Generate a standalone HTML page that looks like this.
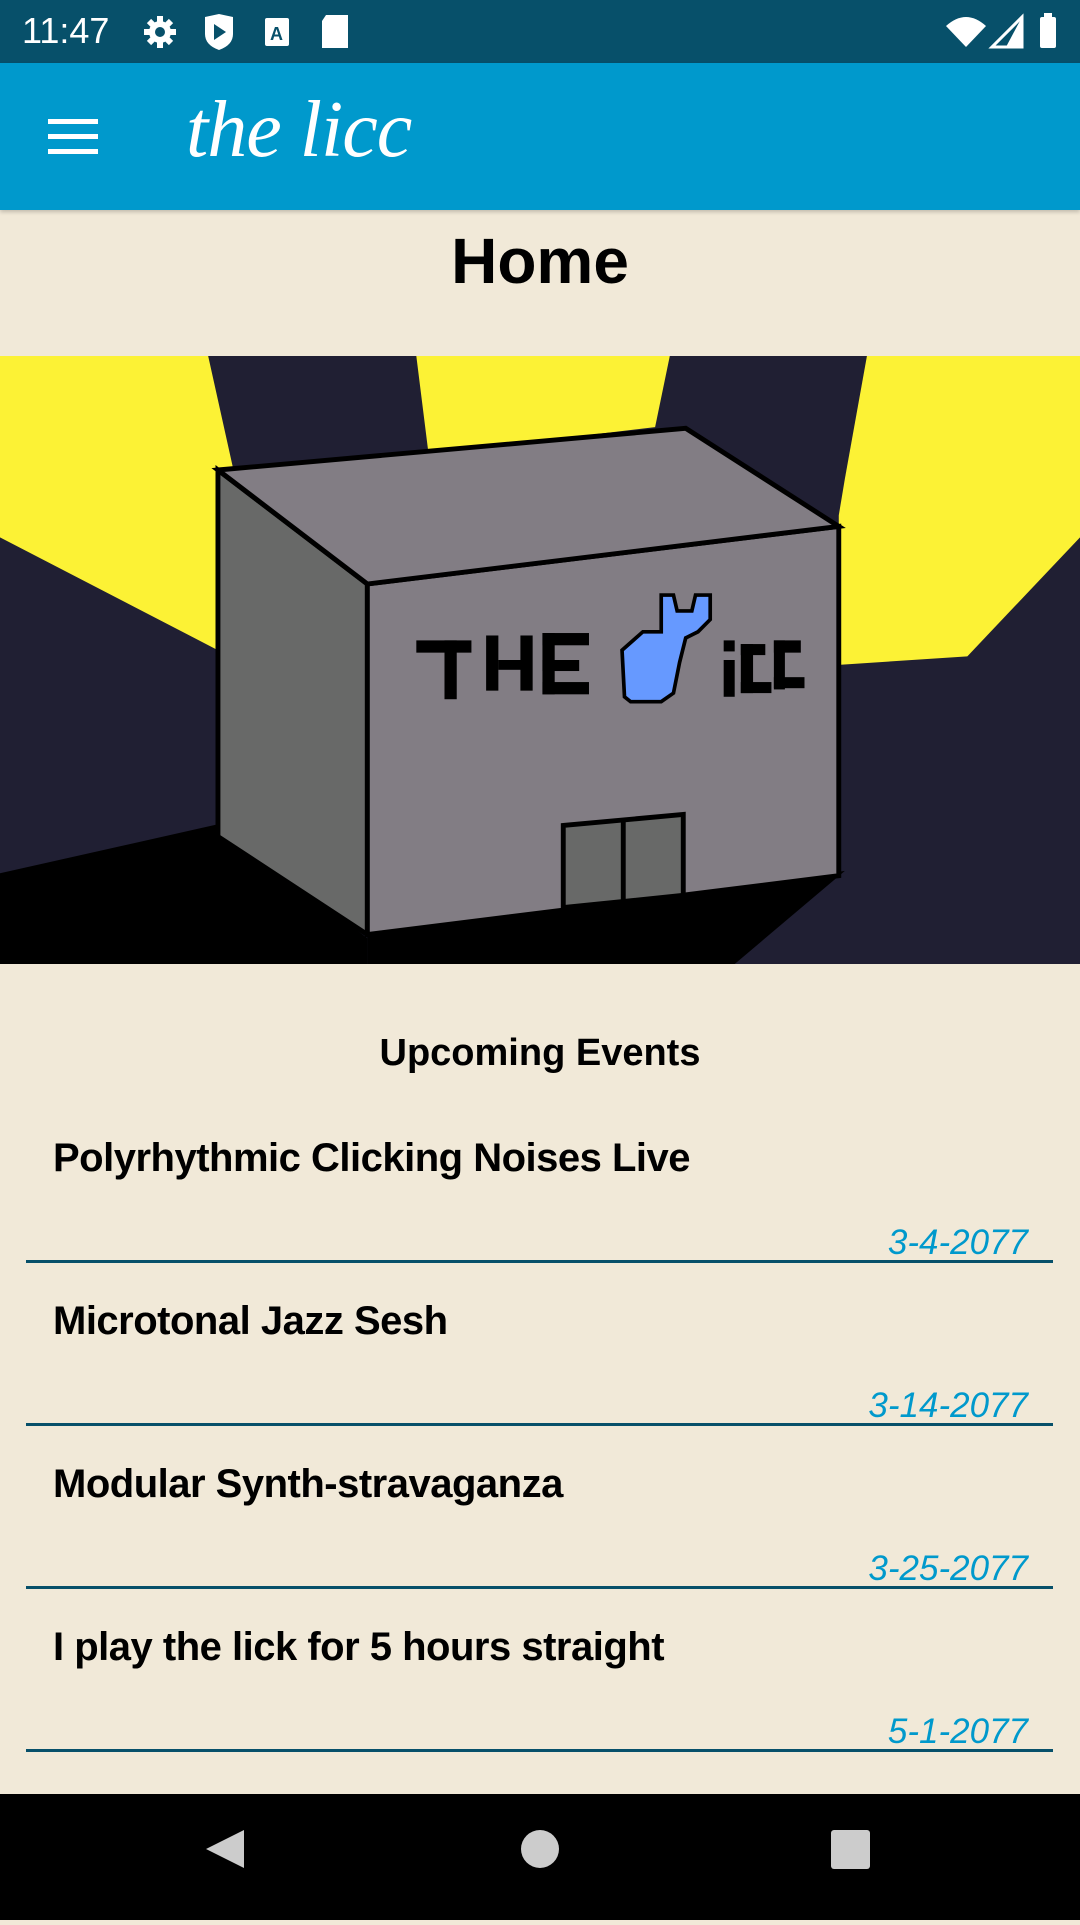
<!DOCTYPE html>
<html><head><meta charset="utf-8"><style>
*{margin:0;padding:0;box-sizing:border-box}
body{width:1080px;height:1920px;background:#F1E9D8;font-family:"Liberation Sans",sans-serif;position:relative;overflow:hidden}
.status{position:absolute;top:0;left:0;width:1080px;height:63px;background:#07506A;color:#fff}
.appbar{position:absolute;top:63px;left:0;width:1080px;height:147px;background:#0099CC;box-shadow:0 2px 4px rgba(0,0,0,.2)}
.home{position:absolute;top:224px;width:1080px;text-align:center;font-size:64px;font-weight:bold;color:#000}
.hero{position:absolute;top:356px;left:0;width:1080px;height:608px}
.up{position:absolute;top:1032px;width:1080px;text-align:center;font-size:38px;font-weight:bold}
.item{position:absolute;left:26px;width:1027px;height:163px;border-bottom:3px solid #07506A}
.item .t{position:absolute;left:27px;top:36px;font-size:40px;font-weight:bold;letter-spacing:-0.5px}
.item .d{position:absolute;right:25px;top:123px;font-size:35px;font-style:italic;color:#0099CC}
.nav{position:absolute;top:1794px;left:0;width:1080px;height:126px;background:#000}
</style></head><body>
<div class="status">
<div style="position:absolute;left:22px;top:10px;font-size:36px;">11:47</div>
<svg width="1080" height="63" style="position:absolute;left:0;top:0">
<g fill="#fff">
<circle cx="160" cy="32" r="11"/>
<g stroke="#fff" stroke-width="6"><line x1="160" y1="16" x2="160" y2="48"/><line x1="144" y1="32" x2="176" y2="32"/><line x1="149" y1="21" x2="171" y2="43"/><line x1="171" y1="21" x2="149" y2="43"/></g>
<circle cx="160" cy="32" r="5" fill="#07506A"/>
<path d="M205 17 L219 14 L233 17 L233 34 Q233 45 219 50 Q205 45 205 34Z"/>
<path d="M214 24 L226 32 L214 40Z" fill="#07506A"/>
<rect x="265" y="18" width="24" height="28" rx="2"/>
<text x="270" y="40" font-size="18" font-weight="bold" fill="#07506A" font-family="Liberation Sans">A</text>
<path d="M326 15 L348 15 L348 48 L322 48 L322 21Z"/>
<path d="M946 26 Q966 8 986 26 L966 47Z"/>
<path d="M1022 17 L1022 47 L992 47Z" fill="none" stroke="#fff" stroke-width="3"/>
<path d="M1022 17 L1022 47 L1006 47Z"/>
<rect x="1040" y="17" width="16" height="31" rx="2"/><rect x="1044" y="13" width="8" height="5"/>
</g></svg>
</div>
<div class="appbar">
<div style="position:absolute;left:48px;top:56px;width:50px;height:5px;background:#fff"></div>
<div style="position:absolute;left:48px;top:71px;width:50px;height:5px;background:#fff"></div>
<div style="position:absolute;left:48px;top:86px;width:50px;height:5px;background:#fff"></div>
<div style="position:absolute;left:186px;top:22px;font-size:80px;font-style:italic;color:#fff;font-family:'Liberation Serif',serif;letter-spacing:-1px">the licc</div>
</div>
<div class="home">Home</div>
<svg class="hero" viewBox="0 0 882 496" preserveAspectRatio="none">
<rect width="882" height="496" fill="#201F33"/>
<g fill="#FCF235">
<polygon points="0,0 170,0 190,90 178,100 178,240 0,148"/>
<polygon points="340,0 547,0 535,58 350,80"/>
<polygon points="708,0 882,0 882,148 790,245 685,252 685,130 690,100"/>
</g>
<polygon points="0,422 178,382 300,475 300,496 0,496" fill="#000"/>
<polygon points="300,496 300,472 560,440 690,420 600,496" fill="#000"/>
<g stroke="#000" stroke-width="4" stroke-linejoin="miter">
<polygon points="178,93 300,186 300,472 178,392" fill="#686968"/>
<polygon points="300,186 685,139 685,424 300,472" fill="#827D84"/>
<polygon points="178,93 560,59 685,139 300,186" fill="#827D84"/>
<polygon points="460,383 558,374 558,440 460,450" fill="#686968"/>
<line x1="509" y1="378" x2="509" y2="446"/>
</g>
<g fill="#000">
<rect x="340" y="232" width="45" height="10"/><rect x="363" y="232" width="10" height="48"/>
<rect x="397" y="228" width="10" height="45"/><rect x="407" y="248" width="20" height="8"/><rect x="425" y="228" width="10" height="45"/>
<rect x="443" y="226" width="10" height="50"/><rect x="443" y="226" width="38" height="10"/><rect x="443" y="248" width="30" height="9"/><rect x="443" y="266" width="38" height="10"/>
<rect x="591" y="232" width="9" height="9"/><rect x="591" y="248" width="9" height="30"/>
<rect x="605" y="235" width="10" height="40"/><rect x="605" y="235" width="20" height="9"/><rect x="605" y="266" width="25" height="9"/>
<rect x="632" y="232" width="9" height="40"/><rect x="632" y="232" width="22" height="10"/><rect x="632" y="262" width="25" height="9"/>
</g>
<path d="M510 278 L508 240 L525 225 L540 225 L540 195 L550 195 L553 208 L565 208 L568 195 L580 195 L580 215 L570 225 L560 230 L555 250 L550 275 L540 282 L515 282Z" fill="#6699FF" stroke="#000" stroke-width="3"/>
</svg>
<div class="up">Upcoming Events</div>
<div class="item" style="top:1100px"><div class="t">Polyrhythmic Clicking Noises Live</div><div class="d">3-4-2077</div></div>
<div class="item" style="top:1263px"><div class="t">Microtonal Jazz Sesh</div><div class="d">3-14-2077</div></div>
<div class="item" style="top:1426px"><div class="t">Modular Synth-stravaganza</div><div class="d">3-25-2077</div></div>
<div class="item" style="top:1589px"><div class="t">I play the lick for 5 hours straight</div><div class="d">5-1-2077</div></div>
<div class="nav">
<svg width="1080" height="126">
<polygon points="244,36 244,74 206,55" fill="#ccc"/>
<circle cx="540" cy="55" r="19" fill="#ccc"/>
<rect x="831" y="36" width="39" height="39" rx="3" fill="#ccc"/>
</svg>
</div>
</body></html>
